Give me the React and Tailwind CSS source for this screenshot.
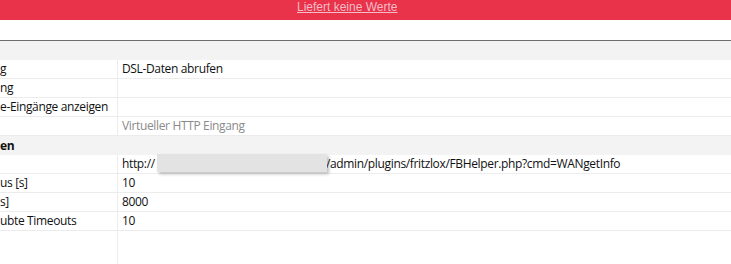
import React from "react";

const font = { fontFamily: '"Open Sans", "Noto Sans", sans-serif' };

function Row({ label, value, gray, children }) {
  return (
    <div className="flex h-[19px] border-b border-[#ececec] bg-white text-[12px] leading-[18px] tracking-[-0.35px] text-[#111]">
      <div className="w-[118px] shrink-0 overflow-hidden whitespace-nowrap border-r border-[#ececec] pl-0">
        {label}
      </div>
      <div className={"flex-1 whitespace-nowrap pl-[4px] " + (gray ? "text-[#8a8a8a]" : "")}>
        {children || value}
      </div>
    </div>
  );
}

function Section({ label }) {
  return (
    <div className="h-[19px] bg-[#f3f3f3] text-[12px] font-bold leading-[19px] tracking-[-0.3px] text-[#111]">{label}</div>
  );
}

export default function App() {
  return (
    <div className="flex h-[264px] w-[731px] flex-col overflow-hidden bg-white" style={font}>
      <div className="flex h-[20px] shrink-0 items-start bg-[#e8334a] pl-[297px]">
        <a
          className="pt-px text-[12px] leading-[12px] text-[#f4bcc6] underline underline-offset-[1px]"
          style={{ fontFamily: '"Liberation Sans", Arial, sans-serif' }}
        >
          Liefert keine Werte
        </a>
      </div>
      <div className="h-[20px] shrink-0 bg-white" />
      <div className="h-px shrink-0 bg-[#6e6e6e]" />
      <Section label="" />
      <Row label="g" value="DSL-Daten abrufen" />
      <Row label="ng" value="" />
      <Row label="e-Eingänge anzeigen" value="" />
      <Row label="" value="Virtueller HTTP Eingang" gray />
      <Section label="en" />
      <Row label="">
        <div className="relative flex">
          <span className="w-[34px] shrink-0">http://</span>
          <span className="w-[170px] shrink-0" />
          <span>/admin/plugins/fritzlox/FBHelper.php?cmd=WANgetInfo</span>
          <div className="absolute left-[35px] top-[-1px] h-[18px] w-[170px] bg-[#e3e3e3] shadow-[2px_2px_3px_rgba(0,0,0,0.25)]" />
        </div>
      </Row>
      <Row label="us [s]" value="10" />
      <Row label="s]" value="8000" />
      <Row label="ubte Timeouts" value="10" />
      <div className="flex flex-1">
        <div className="w-[118px] shrink-0 border-r border-[#ececec]" />
        <div className="flex-1" />
      </div>
    </div>
  );
}
